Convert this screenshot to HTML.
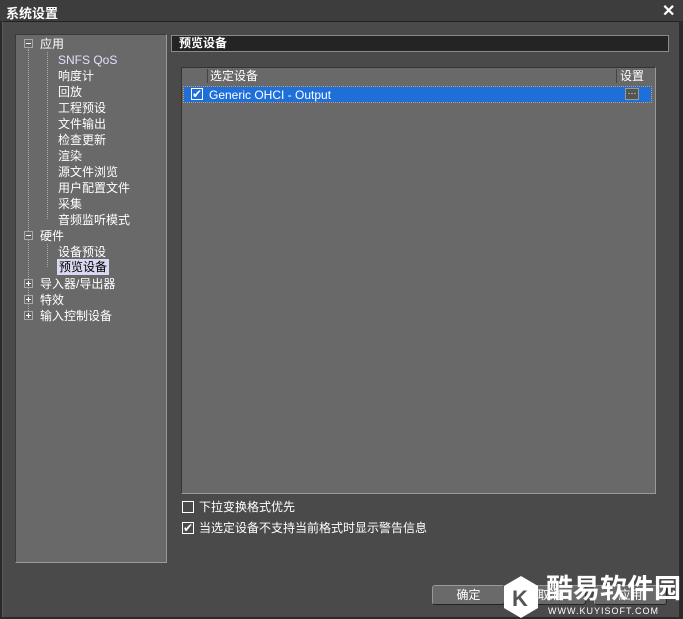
<!DOCTYPE html>
<html><head><meta charset="utf-8"><style>
*{margin:0;padding:0;box-sizing:border-box}
body{width:683px;height:619px;background:#2a2a2a;font-family:"Liberation Sans","Noto Sans CJK SC",sans-serif;font-size:12px;color:#fff;position:relative;overflow:hidden}
.abs{position:absolute}
#title{left:0;top:0;width:683px;height:21px;background:#3d3d3d;}
#title span{position:absolute;left:6px;top:3px;font-weight:bold;font-size:13px}
#main{left:2px;top:21px;width:677px;height:596px;background:#4a4a4a;border-top:1px solid #222;border-left:1px solid #5a5a5a}
#left{left:15px;top:34px;width:152px;height:529px;background:#696969;border-top:1px solid #3a3a3a;border-left:1px solid #3a3a3a;border-right:1px solid #9a9a9a;border-bottom:1px solid #9a9a9a}
.t{position:absolute;white-space:nowrap;font-size:12px;line-height:16px}
.box{position:absolute;width:9px;height:9px;border:1px solid #aaa;background:#666}
.box::after{content:"";position:absolute;left:1px;top:3px;width:5px;height:1px;background:#fff}
.plus::before{content:"";position:absolute;left:3px;top:1px;width:1px;height:5px;background:#fff}
.vl{position:absolute;border-left:1px dotted #aaa;width:0}
.hl{position:absolute;border-top:1px dotted #aaa;height:0;width:9px}
#hdr{left:171px;top:35px;width:498px;height:17px;background:#242424;border:1px solid #8a8a8a}
#hdr span{position:absolute;left:7px;top:0;font-weight:bold;font-size:12px;line-height:15px}
#list{left:181px;top:67px;width:475px;height:427px;background:#696969;border-top:1px solid #333;border-left:1px solid #333;border-right:1px solid #9a9a9a;border-bottom:1px solid #9a9a9a}
#sel{left:183px;top:86px;width:469px;height:17px;background:#1e6fd9;border:1px dotted #e59a2a}
.cb{position:absolute;width:12px;height:12px;border:1px solid #fff}
.btn{position:absolute;height:20px;background:#6a6a6a;border:1px solid #999;border-right-color:#222;border-bottom-color:#222;border-radius:3px;text-align:center;line-height:18px;font-size:12px}
</style></head><body>
<div id="title" class="abs"><span>系统设置</span><span style="left:662px;top:1px;font-size:16px">✕</span></div>
<div id="main" class="abs"></div>
<div id="left" class="abs"></div>
<!-- tree -->
<div class="vl" style="left:28px;top:49px;height:186px"></div>
<div class="vl" style="left:28px;top:240px;height:75px"></div>
<div class="vl" style="left:47px;top:52px;height:167px"></div>
<div class="vl" style="left:47px;top:244px;height:23px"></div>
<div class="box" style="left:24px;top:39px"></div><div class="t" style="left:40px;top:36px">应用</div>
<div class="t" style="left:58px;top:52px;color:#e0e0ff">SNFS QoS</div>
<div class="t" style="left:58px;top:68px">响度计</div>
<div class="t" style="left:58px;top:84px">回放</div>
<div class="t" style="left:58px;top:100px">工程预设</div>
<div class="t" style="left:58px;top:116px">文件输出</div>
<div class="t" style="left:58px;top:132px">检查更新</div>
<div class="t" style="left:58px;top:148px">渲染</div>
<div class="t" style="left:58px;top:164px">源文件浏览</div>
<div class="t" style="left:58px;top:180px">用户配置文件</div>
<div class="t" style="left:58px;top:196px">采集</div>
<div class="t" style="left:58px;top:212px">音频监听模式</div>
<div class="box" style="left:24px;top:231px"></div><div class="t" style="left:40px;top:228px">硬件</div>
<div class="t" style="left:58px;top:244px">设备预设</div>
<div class="t" style="left:57px;top:259px;background:#d8d8f0;color:#000;padding:0 2px">预览设备</div>
<div class="box plus" style="left:24px;top:279px"></div><div class="t" style="left:40px;top:276px">导入器/导出器</div>
<div class="box plus" style="left:24px;top:295px"></div><div class="t" style="left:40px;top:292px">特效</div>
<div class="box plus" style="left:24px;top:311px"></div><div class="t" style="left:40px;top:308px">输入控制设备</div>
<!-- right -->
<div id="hdr" class="abs"><span>预览设备</span></div>
<div id="list" class="abs"></div>
<div class="abs" style="left:207px;top:69px;width:1px;height:14px;background:#444"></div>
<div class="abs" style="left:616px;top:69px;width:1px;height:14px;background:#444"></div>
<div class="t" style="left:210px;top:68px">选定设备</div>
<div class="t" style="left:620px;top:68px">设置</div>
<div id="sel" class="abs"></div>
<div class="cb" style="left:191px;top:88px;font-size:12px;line-height:10px;text-align:center">✔</div>
<div class="t" style="left:209px;top:87px">Generic OHCI - Output</div>
<div class="abs" style="left:625px;top:88px;width:14px;height:12px;background:#555;border:1px solid #999;font-size:9px;line-height:9px;text-align:center">···</div>
<div class="cb" style="left:182px;top:501px"></div><div class="t" style="left:199px;top:499px">下拉变换格式优先</div>
<div class="cb" style="left:182px;top:522px;font-size:12px;line-height:10px;text-align:center">✔</div><div class="t" style="left:199px;top:520px">当选定设备不支持当前格式时显示警告信息</div>
<div class="btn" style="left:432px;top:585px;width:73px">确定</div>
<div class="btn" style="left:513px;top:585px;width:73px">取消</div>
<div class="btn" style="left:594px;top:585px;width:73px">应用</div>
<!-- watermark -->
<svg class="abs" style="left:502px;top:575px" width="38" height="44"><polygon points="19,1 36,11 36,33 19,43 2,33 2,11" fill="#fff"/><text x="10" y="31" font-size="22" font-weight="bold" fill="#555" font-family="Liberation Sans">K</text></svg>
<div class="t" style="left:546px;top:574px;font-size:27px;line-height:30px;font-weight:bold">酷易软件园</div>
<div class="t" style="left:548px;top:606px;font-size:9px;line-height:10px;letter-spacing:1px">WWW.KUYISOFT.COM</div>
</body></html>
